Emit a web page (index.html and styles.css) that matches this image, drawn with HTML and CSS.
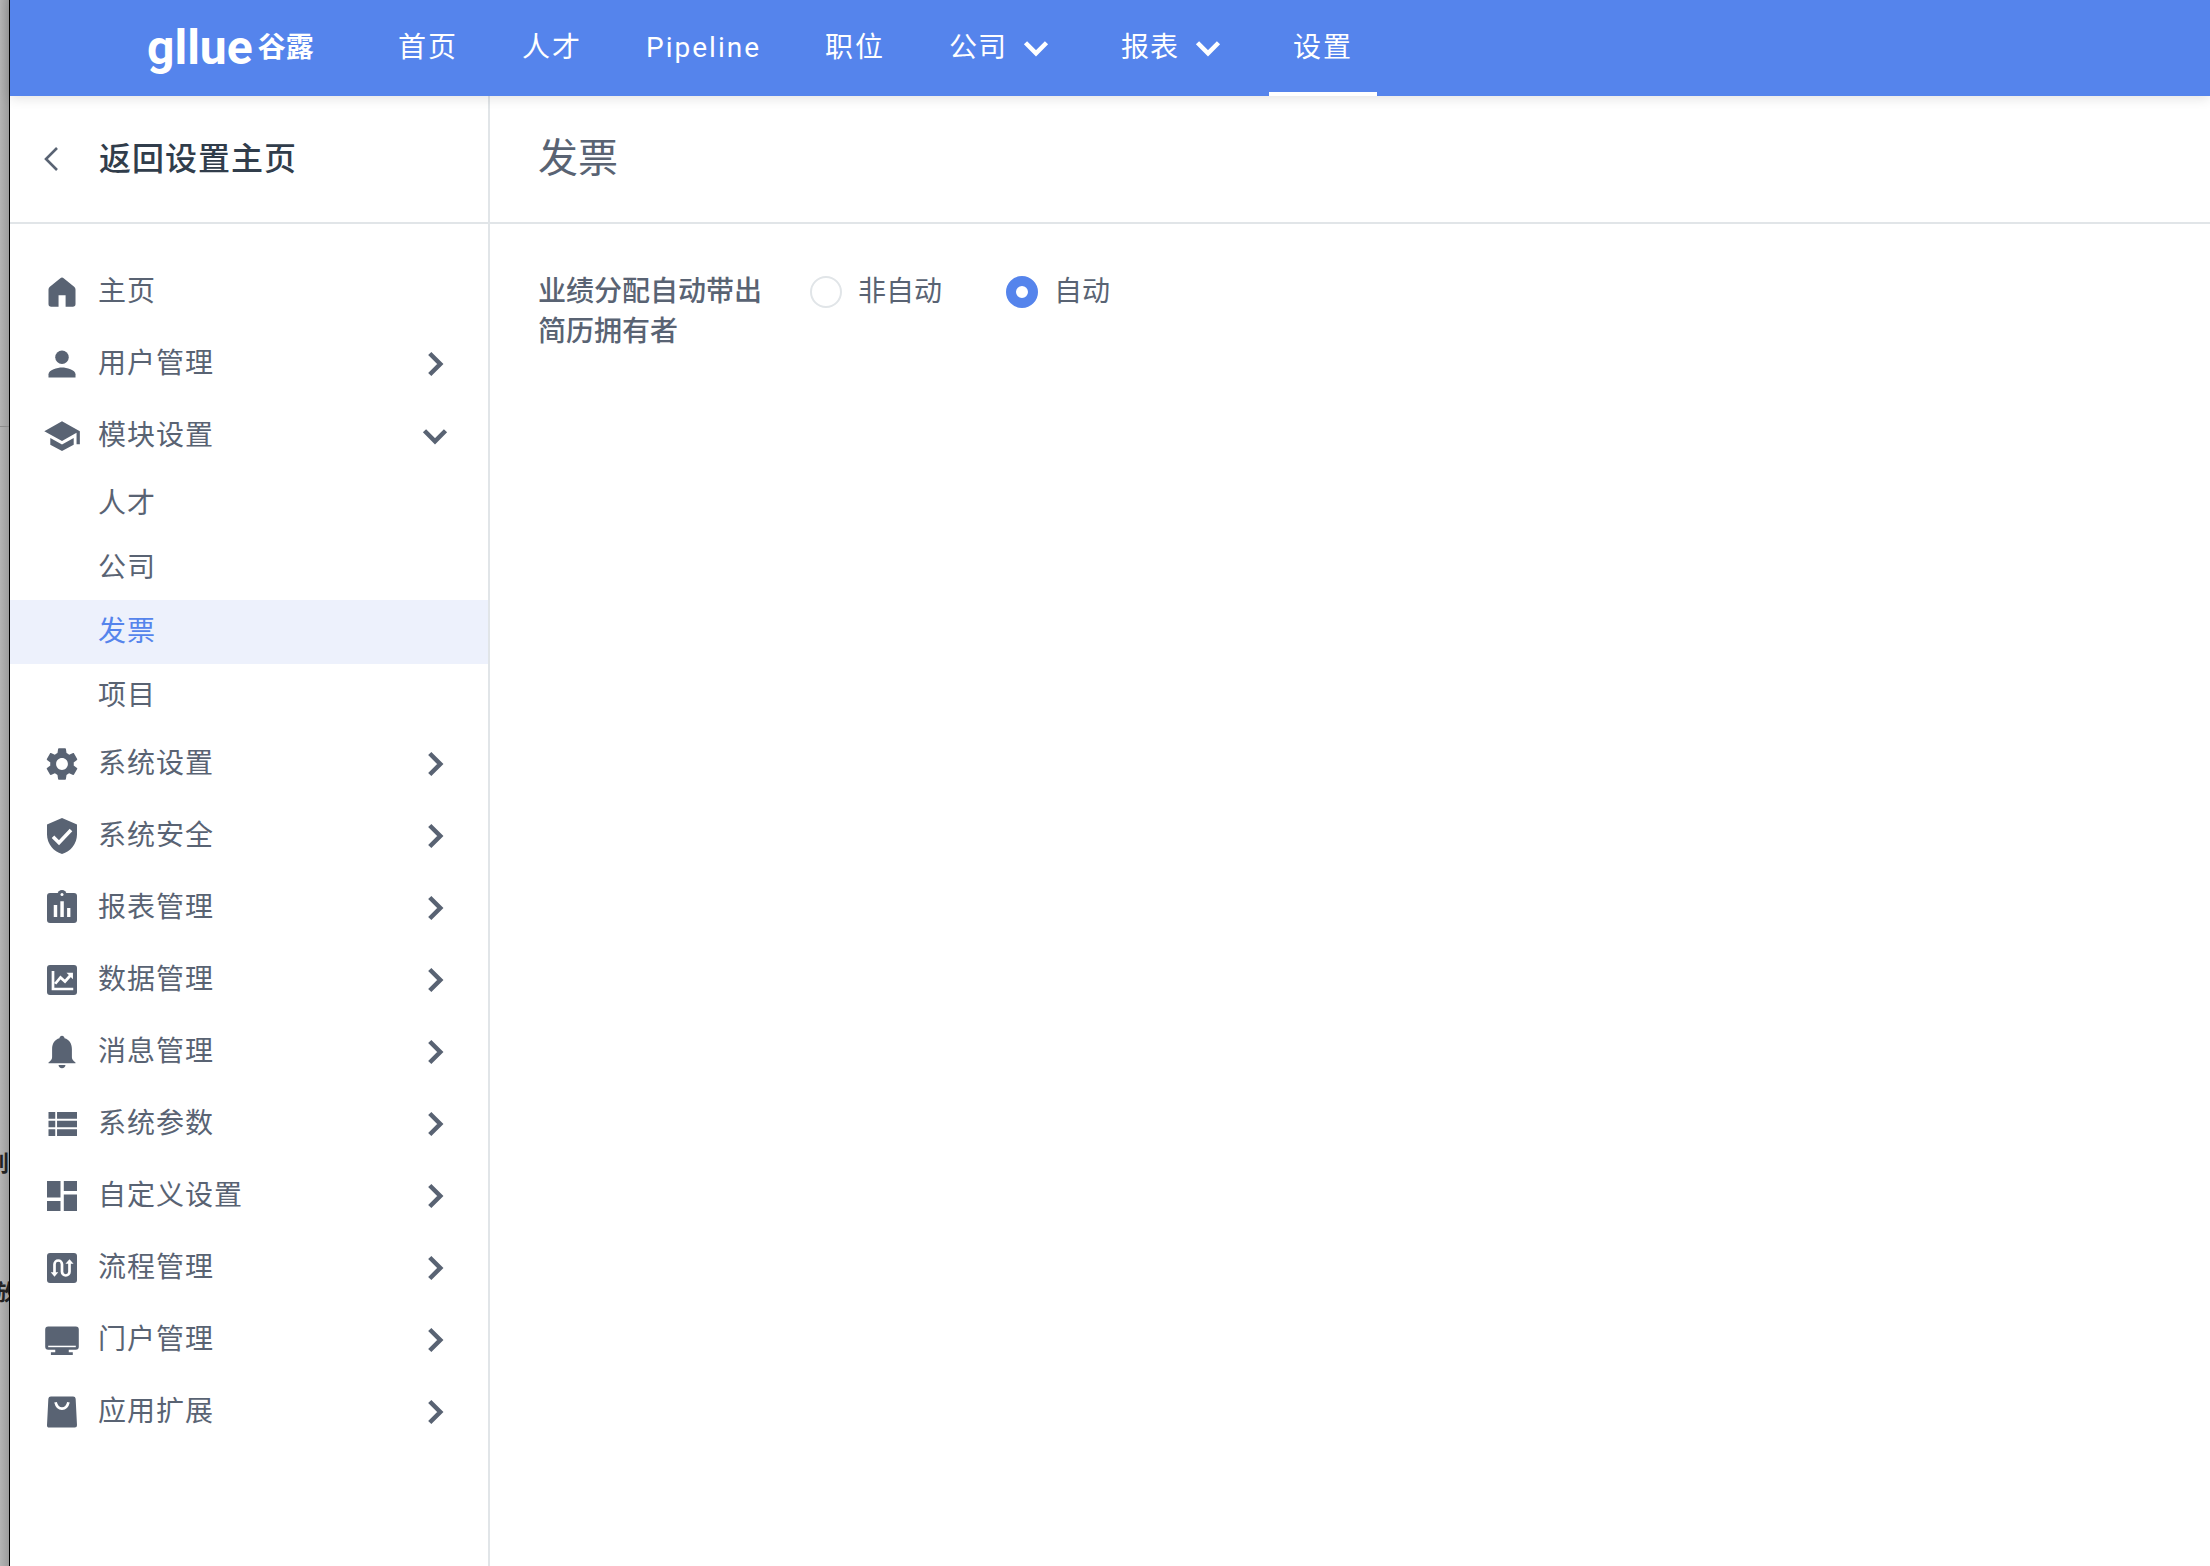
FILE: index.html
```
<!DOCTYPE html>
<html lang="zh-CN">
<head>
    <meta charset="UTF-8">
    <meta name="viewport" content="width=device-width, initial-scale=1.0">
    <title>谷露 - 发票设置</title>
    <link rel="stylesheet" href="styles.css">
</head>
<body>
    <!-- shared icons -->
    <svg class="sprite" aria-hidden="true">
        <symbol id="arrow-down" viewBox="0 0 24 24"><path d="M6 9l6 6 6-6" fill="none" stroke="currentColor" stroke-width="2.6"/></symbol>
        <symbol id="arrow-right" viewBox="0 0 24 24"><path d="M9 6l6 6-6 6" fill="none" stroke="currentColor" stroke-width="2.6"/></symbol>
    </svg>

    <div class="backdrop" aria-hidden="true">
        <span class="backdrop-line"></span>
        <span class="backdrop-text first">别</span>
        <span class="backdrop-text second">放</span>
    </div>

    <div class="window">
        <header class="topbar">
            <a class="logo" href="#"><span class="logo-en">gllue</span><span class="logo-cn">谷露</span></a>
            <nav class="topnav">
                <a href="#">首页</a>
                <a href="#">人才</a>
                <a href="#">Pipeline</a>
                <a href="#">职位</a>
                <button type="button" class="nav-drop">公司<svg><use href="#arrow-down"/></svg></button>
                <button type="button" class="nav-drop">报表<svg><use href="#arrow-down"/></svg></button>
                <a href="#" class="active">设置</a>
            </nav>
        </header>

        <div class="layout">
            <aside class="sidebar">
                <a class="back" href="#">
                    <svg viewBox="0 0 24 24"><path d="M18 1L7 12l11 11" fill="none" stroke="currentColor" stroke-width="2.6"/></svg>
                    返回设置主页
                </a>
                <nav class="menu">
                    <a class="menu-item" href="#">
                        <svg class="icon" viewBox="0 0 24 24"><path d="M12 2.4q.6 0 1.100.4l7 5.700q.900.700.900 1.800V20q0 1.800-1.800 1.800H14.400v-7.600H9.700v7.600H4.800Q3 21.800 3 20v-9.700q0-1.100.9-1.800l7-5.700q.5-.4 1.100-.4z"/></svg>
                        <span>主页</span>
                    </a>
                    <button type="button" class="menu-item">
                        <svg class="icon" viewBox="0 0 24 24"><circle cx="12" cy="7.500" r="4.500"/><path d="M3 21v-2.200c0-3 6-4.500 9-4.500s9 1.500 9 4.500V21z"/></svg>
                        <span>用户管理</span>
                        <svg class="arrow"><use href="#arrow-right"/></svg>
                    </button>
                    <button type="button" class="menu-item" aria-expanded="true">
                        <svg class="icon" viewBox="0 0 24 24"><path d="M4.200 13.400v4.400L12 22l7.800-4.200v-4.400L12 17.600z"/><path d="M12 2.200L.2 8.800 12 15.300l9.700-5.400v7.600h2.200V8.800z"/></svg>
                        <span>模块设置</span>
                        <svg class="arrow"><use href="#arrow-down"/></svg>
                    </button>
                    <div class="submenu">
                        <a href="#">人才</a>
                        <a href="#">公司</a>
                        <a href="#" class="current">发票</a>
                        <a href="#">项目</a>
                    </div>
                    <button type="button" class="menu-item">
                        <svg class="icon" viewBox="1 1 22 22"><path d="M19.140 12.940c.040-.3.060-.61.060-.94 0-.32-.020-.64-.070-.94l2.030-1.580c.180-.14.230-.41.120-.61l-1.920-3.320c-.12-.22-.37-.29-.59-.22l-2.390.96c-.5-.38-1.030-.7-1.620-.94l-.36-2.540c-.040-.24-.24-.41-.48-.41h-3.840c-.24 0-.43.170-.47.410l-.36 2.540c-.59.240-1.130.570-1.620.940l-2.390-.96c-.22-.080-.47 0-.59.220L2.740 8.870c-.12.210-.080.470.120.610l2.030 1.580c-.050.300-.090.630-.090.940s.020.640.070.940l-2.030 1.580c-.18.140-.23.410-.12.610l1.920 3.320c.12.220.370.290.590.220l2.390-.96c.5.380 1.030.700 1.620.940l.36 2.540c.050.240.240.410.480.410h3.840c.24 0 .44-.17.470-.41l.36-2.540c.59-.24 1.130-.56 1.620-.94l2.390.960c.22.080.470 0 .59-.22l1.920-3.320c.12-.22.070-.47-.12-.61l-2.010-1.580zM12 15.600c-1.980 0-3.600-1.620-3.600-3.600s1.620-3.600 3.600-3.600 3.600 1.620 3.600 3.600-1.620 3.600-3.600 3.600z"/></svg>
                        <span>系统设置</span>
                        <svg class="arrow"><use href="#arrow-right"/></svg>
                    </button>
                    <button type="button" class="menu-item">
                        <svg class="icon" viewBox="0 0 24 24"><path d="M12 0L2 4.300v6.600C2 17 6.300 22.600 12 24c5.700-1.400 10-7 10-13.100V4.300z"/><path class="cut" d="M6 12.500l4 4 8-8.500"/></svg>
                        <span>系统安全</span>
                        <svg class="arrow"><use href="#arrow-right"/></svg>
                    </button>
                    <button type="button" class="menu-item">
                        <svg class="icon" viewBox="0 0 24 24"><rect x="2" y="2" width="20" height="20" rx="2"/><circle cx="12" cy="3" r="3"/><circle class="hole" cx="12" cy="3" r="1"/><path class="hole" d="M6.500 10h2.300v8H6.500zM10.900 7.500h2.300V18h-2.300zM15.400 12h2.200v6h-2.200z"/></svg>
                        <span>报表管理</span>
                        <svg class="arrow"><use href="#arrow-right"/></svg>
                    </button>
                    <button type="button" class="menu-item">
                        <svg class="icon" viewBox="0 0 24 24"><rect x="2" y="2" width="20" height="20" rx="2"/><path class="cut thin" d="M6 6v12h13.500M7.500 14.500l3.500-4.200 3 2.700 4-4.500"/><path class="hole" d="M15 7.200h4.300v4.300z"/></svg>
                        <span>数据管理</span>
                        <svg class="arrow"><use href="#arrow-right"/></svg>
                    </button>
                    <button type="button" class="menu-item">
                        <svg class="icon" viewBox="0 0 24 24"><path d="M12 1.200c-.9 0-1.600.700-1.700 1.700C7.200 3.700 5.400 6.500 5.400 10v5.500c0 1.300-.9 2.300-2.400 3.500v.5h18V19c-1.500-1.200-2.400-2.200-2.400-3.500V10c0-3.500-1.800-6.300-4.900-7.100-.1-1-.8-1.700-1.700-1.700zM9.700 20.700h4.600c0 1.200-1 2.100-2.300 2.100s-2.300-.9-2.300-2.100z"/></svg>
                        <span>消息管理</span>
                        <svg class="arrow"><use href="#arrow-right"/></svg>
                    </button>
                    <button type="button" class="menu-item">
                        <svg class="icon" viewBox="0 0 24 24"><path d="M3 4h4.500v4.500H3zM8.700 4H22v4.500H8.700zM3 9.900h4.500v4.200H3zM8.700 9.900H22v4.200H8.700zM3 15.500h4.500V20H3zM8.700 15.500H22V20H8.700z"/></svg>
                        <span>系统参数</span>
                        <svg class="arrow"><use href="#arrow-right"/></svg>
                    </button>
                    <button type="button" class="menu-item">
                        <svg class="icon" viewBox="0 0 24 24"><path d="M2 2h9v11H2zM13.200 2H22v6.700h-8.800zM2 15.300h9V22H2zM13.200 11H22v11h-8.800z"/></svg>
                        <span>自定义设置</span>
                        <svg class="arrow"><use href="#arrow-right"/></svg>
                    </button>
                    <button type="button" class="menu-item">
                        <svg class="icon" viewBox="0 0 24 24"><rect x="2" y="2" width="20" height="20" rx="2"/><path class="cut thin" d="M7 16V9.500a2.500 2.500 0 0 1 5 0v5a2.500 2.500 0 0 0 5 0V8"/><path class="hole" d="M4.500 14.800h5L7 17.800zM14.300 9.200h5.400L17 6.200z"/></svg>
                        <span>流程管理</span>
                        <svg class="arrow"><use href="#arrow-right"/></svg>
                    </button>
                    <button type="button" class="menu-item">
                        <svg class="icon" viewBox="0 0 24 24"><path d="M2.800 3h18.400q2 0 2 2v11.500q0 2-2 2H16.500v1.600H19.200V22H4.600v-1.900H7.500v-1.600H2.800q-2 0-2-2V5q0-2 2-2z"/><path class="cut hair" d="M2.800 16.300h18.400"/></svg>
                        <span>门户管理</span>
                        <svg class="arrow"><use href="#arrow-right"/></svg>
                    </button>
                    <button type="button" class="menu-item">
                        <svg class="icon" viewBox="0 0 24 24"><path d="M4.600 1.600h14.800q1.600 0 1.700 1.600L22 20.800q.1 1.600-1.500 1.600H3.500q-1.600 0-1.500-1.600L2.900 3.200q.1-1.600 1.700-1.600z"/><path class="cut thin" d="M7.700 5.500C8.300 8 9.800 9.800 12 9.800s3.700-1.800 4.300-4.300"/></svg>
                        <span>应用扩展</span>
                        <svg class="arrow"><use href="#arrow-right"/></svg>
                    </button>
                </nav>
            </aside>

            <main class="content">
                <div class="content-header">
                    <h1>发票</h1>
                </div>
                <form class="settings">
                    <fieldset class="field" aria-labelledby="owner-label">
                        <div class="field-label" id="owner-label">业绩分配自动带出简历拥有者</div>
                        <label class="radio" for="manual">
                            <input type="radio" id="manual" name="owner" value="manual">
                            非自动
                        </label>
                        <label class="radio" for="auto">
                            <input type="radio" id="auto" name="owner" value="auto" checked>
                            自动
                        </label>
                    </fieldset>
                </form>
            </main>
        </div>
    </div>
</body>
</html>
```
FILE: styles.css
```
/* Basic Reset */
* {
    margin: 0;
    padding: 0;
    box-sizing: border-box;
}

body {
    display: flex;
    min-height: 100vh;
    background: #fff;
    color: #596373;
    font-family: Roboto, "Noto Sans CJK SC", sans-serif;
    font-size: 28px;
    line-height: 40px;
}

a {
    color: inherit;
    text-decoration: none;
}

button {
    border: none;
    background: none;
    color: inherit;
    font: inherit;
    letter-spacing: inherit;
    cursor: pointer;
}

.sprite {
    position: absolute;
    width: 0;
    height: 0;
}

/* Strip of the page behind the window */
.backdrop {
    position: relative;
    flex: 0 0 10px;
    overflow: hidden;
    border-right: 1px solid #000;
    background: linear-gradient(to right, #b4b4b4, #9c9c9c);
    color: #222;
}

.backdrop-line {
    position: absolute;
    top: 426px;
    left: 0;
    right: 0;
    height: 1px;
    background: #8c8c8c;
}

.backdrop-text {
    position: absolute;
    font-size: 22px;
    font-weight: bold;
    line-height: 32px;
}

.first {
    top: 1148px;
    right: 0;
}

.second {
    top: 1277px;
    right: -8px;
}

.window {
    display: flex;
    flex: 1;
    flex-direction: column;
    min-width: 0;
}

/* Top bar */
.topbar {
    position: relative;
    display: flex;
    align-items: center;
    height: 96px;
    padding-left: 137px;
    background: #5584ec;
    color: #fff;
    box-shadow: 0 2px 12px rgba(0, 0, 0, 0.12);
}

.logo {
    display: flex;
    align-items: center;
    gap: 5px;
    width: 227px;
    font-weight: bold;
}

.logo-en {
    font-size: 48px;
    line-height: 56px;
}

.logo-cn {
    font-size: 28px;
}

.topnav {
    display: flex;
    align-self: stretch;
    gap: 16px;
    letter-spacing: 2px;
}

.topnav a,
.nav-drop {
    display: flex;
    align-items: center;
    gap: 8px;
    padding: 4px 24px 0;
    border-bottom: 4px solid transparent;
}

.nav-drop {
    letter-spacing: 1px;
}

.nav-drop svg {
    width: 42px;
    height: 42px;
}

.topnav .active {
    border-bottom-color: #fff;
}

.layout {
    display: flex;
    flex: 1;
}

/* Sidebar */
.sidebar {
    flex: 0 0 480px;
    border-right: 2px solid #e1e5e8;
    letter-spacing: 1px;
}

.back {
    display: flex;
    align-items: center;
    gap: 36px;
    height: 128px;
    padding-left: 29px;
    border-bottom: 2px solid #e1e5e8;
    color: #313d4b;
    font-size: 32px;
    font-weight: 500;
}

.back svg {
    width: 24px;
    height: 24px;
    color: #596373;
}

.menu {
    padding: 32px 0;
}

.menu-item {
    display: flex;
    align-items: center;
    width: 100%;
    height: 72px;
    padding: 0 32px 0 34px;
    text-align: left;
}

.menu-item span {
    flex: 1;
}

.icon {
    width: 36px;
    height: 36px;
    margin-right: 18px;
    fill: #596373;
}

.icon .hole {
    fill: #fff;
}

.icon .cut {
    fill: none;
    stroke: #fff;
    stroke-width: 2.4;
}

.icon .thin {
    stroke-width: 1.8;
}

.icon .hair {
    stroke-width: 1;
}

.arrow {
    width: 42px;
    height: 42px;
}

.submenu a {
    display: block;
    padding: 12px 0 12px 88px;
}

.submenu .current {
    background: #edf1fc;
    color: #5584ec;
}

/* Content */
.content {
    flex: 1;
}

.content-header {
    display: flex;
    align-items: center;
    height: 128px;
    padding: 0 48px;
    border-bottom: 2px solid #e1e5e8;
}

h1 {
    font-size: 40px;
    font-weight: normal;
}

.settings {
    padding: 48px;
}

.field {
    display: flex;
    align-items: flex-start;
    border: none;
}

.field-label {
    width: 240px;
    margin-right: 32px;
    font-weight: 500;
}

.radio {
    display: flex;
    align-items: center;
    gap: 16px;
    margin-right: 64px;
}

.radio input {
    width: 32px;
    height: 32px;
    border: 2px solid #e1e5e8;
    border-radius: 50%;
    background: #fff;
    appearance: none;
}

.radio input:checked {
    border: 10px solid #5584ec;
}
```
